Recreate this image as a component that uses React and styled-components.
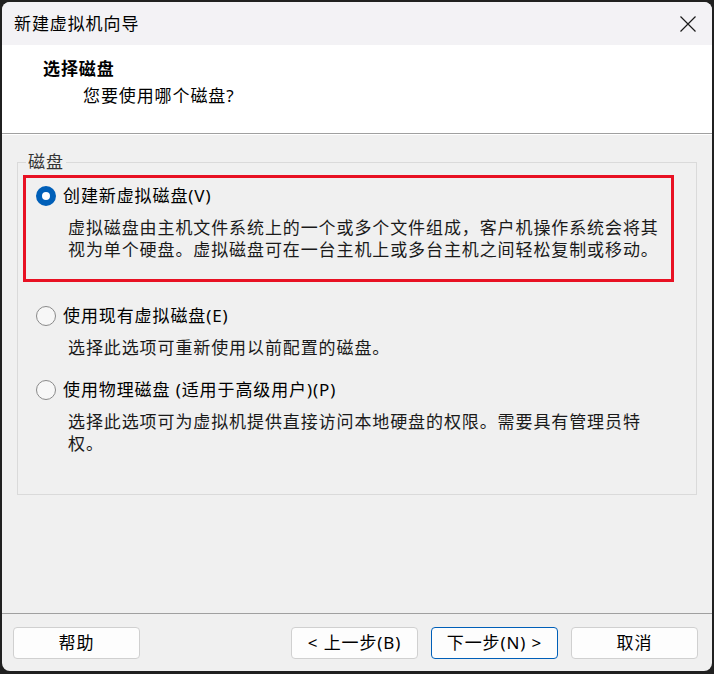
import styled, { createGlobalStyle } from 'styled-components';

const GlobalStyle = createGlobalStyle`
    html, body {
        margin: 0;
        padding: 0;
        background: #202020;
    }
    body {
        font-family: "Noto Sans", "Noto Sans CJK SC", sans-serif;
    }
`;

const options = [
    {
        label: '创建新虚拟磁盘(V)',
        lines: [
            '虚拟磁盘由主机文件系统上的一个或多个文件组成，客户机操作系统会将其',
            '视为单个硬盘。虚拟磁盘可在一台主机上或多台主机之间轻松复制或移动。',
        ],
        checked: true,
        highlight: true,
    },
    {
        label: '使用现有虚拟磁盘(E)',
        lines: ['选择此选项可重新使用以前配置的磁盘。'],
    },
    {
        label: '使用物理磁盘 (适用于高级用户)(P)',
        lines: [
            '选择此选项可为虚拟机提供直接访问本地硬盘的权限。需要具有管理员特',
            '权。',
        ],
    },
];

const CloseIcon = () => (
    <svg width="16" height="16" viewBox="0 0 16 16">
        <path d="M0.5 0.5 L15.5 15.5 M15.5 0.5 L0.5 15.5" stroke="#1a1a1a" strokeWidth="1.2" fill="none" />
    </svg>
);

const App = () => {
    return (
        <>
            <GlobalStyle />
            <Window>
                <TitleBar>
                    <Title>新建虚拟机向导</Title>
                    <CloseButton><CloseIcon /></CloseButton>
                </TitleBar>
                <Header>
                    <HeaderTitle>选择磁盘</HeaderTitle>
                    <HeaderSub>您要使用哪个磁盘?</HeaderSub>
                </Header>
                <Body>
                    <Group>
                        <Legend>磁盘</Legend>
                        {options.map((o, i) => (
                            <Option key={i} $highlight={o.highlight} $index={i}>
                                <OptionRow>
                                    <Radio $checked={o.checked} />
                                    <OptionLabel>{o.label}</OptionLabel>
                                </OptionRow>
                                <Desc>
                                    {o.lines.map((l, j) => <DescLine key={j}>{l}</DescLine>)}
                                </Desc>
                            </Option>
                        ))}
                    </Group>
                </Body>
                <Footer>
                    <Button>帮助</Button>
                    <ButtonGroup>
                        <Button>&lt; 上一步(B)</Button>
                        <Button $primary>下一步(N) &gt;</Button>
                        <Button>取消</Button>
                    </ButtonGroup>
                </Footer>
            </Window>
        </>
    );
}

export default App;

/* window frame */
const Window = styled.div`
    margin: 2px;
    width: 710px;
    height: 669px;
    border-radius: 8px;
    overflow: hidden;
    background: #f0f0f0;
    display: flex;
    flex-direction: column;
    color: #000;
    font-size: 17px;
    letter-spacing: 0.9px;
`;

const TitleBar = styled.div`
    height: 43px;
    flex: none;
    background: #f3f2f5;
    display: flex;
    align-items: center;
    justify-content: space-between;
    padding: 0 16px 0 12px;
`;

const Title = styled.div`
    line-height: 22px;
`;

const CloseButton = styled.div`
    display: flex;
    align-items: center;
    margin-top: 1px;
`;

const Header = styled.div`
    height: 89px;
    flex: none;
    box-sizing: border-box;
    background: #fff;
    border-bottom: 1px solid #a0a0a0;
    box-shadow: 0 1px 0 #fff;
    padding: 13px 0 0 41px;
`;

const HeaderTitle = styled.div`
    font-weight: 700;
    line-height: 22px;
`;

const HeaderSub = styled.div`
    line-height: 22px;
    margin-top: 5px;
    padding-left: 40px;
`;

const Body = styled.div`
    flex: 1;
    padding: 17px 15px 0;
`;

const Group = styled.fieldset`
    margin: 0;
    padding: 0 0 36px;
    min-inline-size: 0;
    border: 1px solid #dadada;
`;

const Legend = styled.legend`
    margin-left: 8px;
    padding: 0 2px;
    line-height: 22px;
    color: #333;
`;

const optionGap = ['2px', '20px', '14px'];

const Option = styled.div`
    width: 651px;
    box-sizing: border-box;
    margin: ${p => optionGap[p.$index]} 0 0 5px;
    border: 3px solid ${p => p.$highlight ? '#e81123' : 'transparent'};
    padding: ${p => p.$highlight ? '7px 10px 18px' : '0 10px'};
`;

const OptionRow = styled.div`
    display: flex;
    align-items: center;
    gap: 7px;
    height: 22px;
`;

const Radio = styled.span`
    width: 20px;
    height: 20px;
    box-sizing: border-box;
    border-radius: 50%;
    flex: none;
    background: ${p => p.$checked ? '#fff' : '#f7f7f7'};
    border: ${p => p.$checked ? '6px solid #005fb8' : '1px solid #8a8a8a'};
`;

const OptionLabel = styled.span`
    line-height: 22px;
    white-space: nowrap;
`;

const Desc = styled.div`
    margin-top: 10px;
    padding-left: 32px;
    color: #1a1a1a;
`;

const DescLine = styled.div`
    line-height: 22px;
    white-space: nowrap;
`;

const Footer = styled.div`
    flex: none;
    border-top: 1px solid #a0a0a0;
    padding: 13px 14px 12px 11px;
    display: flex;
    justify-content: space-between;
`;

const ButtonGroup = styled.div`
    display: flex;
    gap: 13px;
`;

const Button = styled.div`
    width: 127px;
    height: 32px;
    box-sizing: border-box;
    border-radius: 4px;
    background: #fdfdfd;
    border: 1px solid ${p => p.$primary ? '#005fb8' : '#d0d0d0'};
    display: flex;
    align-items: center;
    justify-content: center;
    line-height: 22px;
    white-space: nowrap;
`;
